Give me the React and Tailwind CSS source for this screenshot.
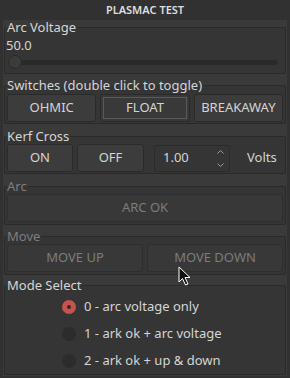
import React from "react";

const font = { fontFamily: '"Noto Sans", "Open Sans", sans-serif' };

function Group({ title, disabled, className = "", children }) {
  return (
    <fieldset
      className={`m-0 min-w-0 border border-[#2a2a2a] rounded-[2px] bg-[#353535] px-[1px] ${className}`}
    >
      <legend
        className={`px-[1px] text-[13px] leading-[15px] ${disabled ? "text-[#7e7e7e]" : "text-[#d6d6d6]"}`}
      >
        {title}
      </legend>
      {children}
    </fieldset>
  );
}

function Btn({ children, className = "", disabled }) {
  return (
    <div
      className={`flex h-[28px] items-center justify-center rounded-[3px] border text-[13px] ${
        disabled
          ? "border-[#2e2e2e] bg-[#383838] text-[#7c7c7c]"
          : "border-[#2a2a2a] bg-[#3c3c3c] text-[#d4d4d4]"
      } ${className}`}
    >
      {children}
    </div>
  );
}

function Radio({ checked, label }) {
  return (
    <div className="flex h-[27px] items-center pl-[56px]">
      {checked ? (
        <div className="flex h-[14px] w-[14px] items-center justify-center rounded-full bg-[#c4544f]">
          <div className="h-[4px] w-[4px] rounded-full bg-[#3a2424]" />
        </div>
      ) : (
        <div className="h-[14px] w-[14px] rounded-full bg-[#2c2c2c]" />
      )}
      <span className="ml-[8px] text-[13px] leading-[15px] text-[#d6d6d6]">{label}</span>
    </div>
  );
}

export default function App() {
  return (
    <div className="relative h-[378px] w-[290px] overflow-hidden bg-[#313131]" style={font}>
      <div className="flex h-[20px] items-center justify-center text-[11px] font-semibold text-[#dedede]">
        PLASMAC TEST
      </div>
      <div className="mx-[3px] bg-[#3a3a3a] px-[1px] pb-[1px]">
        <Group title="Arc Voltage" className="pb-[2px]">
          <div className="pt-[3px] text-[13px] leading-[15px] text-[#d6d6d6]">50.0</div>
          <div className="relative flex h-[18px] items-center">
            <div className="ml-[8px] mr-[6px] h-[5px] flex-1 rounded-full bg-[#2a2a2a]" />
            <div className="absolute left-[2px] top-[2px] h-[14px] w-[14px] rounded-full border border-[#2a2a2a] bg-[#3b3b3b]" />
          </div>
        </Group>

        <Group title="Switches (double click to toggle)" className="mt-[4px] pb-[1px]">
          <div className="grid grid-cols-3 gap-[4px] px-[1px] pt-[1px]">
            <Btn>OHMIC</Btn>
            <Btn className="bg-[#393939] outline outline-1 -outline-offset-[4px] outline-[#595959]">FLOAT</Btn>
            <Btn>BREAKAWAY</Btn>
          </div>
        </Group>

        <Group title="Kerf Cross" className="mt-[5px] pb-[1px]">
          <div className="flex items-center px-[1px]">
            <Btn className="w-[66px]">ON</Btn>
            <Btn className="ml-[4px] w-[67px]">OFF</Btn>
            <div className="ml-[10px] flex h-[27px] w-[76px] items-center justify-between rounded-[3px] border border-[#2a2a2a] bg-[#353535] pl-[8px] pr-[5px]">
              <span className="text-[13px] text-[#d4d4d4]">1.00</span>
              <div className="flex flex-col items-center gap-[9px]">
                <svg width="7" height="4" viewBox="0 0 7 4">
                  <path d="M0.5 3.5 L3.5 0.5 L6.5 3.5" fill="none" stroke="#9c9c9c" strokeWidth="1" />
                </svg>
                <svg width="7" height="4" viewBox="0 0 7 4">
                  <path d="M0.5 0.5 L3.5 3.5 L6.5 0.5" fill="none" stroke="#9c9c9c" strokeWidth="1" />
                </svg>
              </div>
            </div>
            <span className="ml-[17px] text-[13px] text-[#d4d4d4]">Volts</span>
          </div>
        </Group>

        <Group title="Arc" disabled className="mt-[5px] pb-[2px]">
          <div className="px-[1px]">
            <Btn disabled>ARC OK</Btn>
          </div>
        </Group>

        <Group title="Move" disabled className="mt-[4px] pb-[2px]">
          <div className="grid grid-cols-2 gap-[4px] px-[1px]">
            <Btn disabled>MOVE UP</Btn>
            <Btn disabled>MOVE DOWN</Btn>
          </div>
        </Group>

        <Group title="Mode Select" className="mt-[3px]">
          <Radio checked label="0 - arc voltage only" />
          <Radio label="1 - ark ok + arc voltage" />
          <Radio label="2 - ark ok + up & down" />
        </Group>
      </div>

      <svg
        className="absolute left-[178px] top-[266px]"
        width="14"
        height="21"
        viewBox="0 0 14 21"
      >
        <path
          d="M1 1 L1 16 L4.5 12.5 L7.5 19 L10 18 L7 11.5 L12 11.5 Z"
          fill="#111"
          stroke="#fff"
          strokeWidth="1"
          strokeLinejoin="round"
        />
      </svg>
    </div>
  );
}
